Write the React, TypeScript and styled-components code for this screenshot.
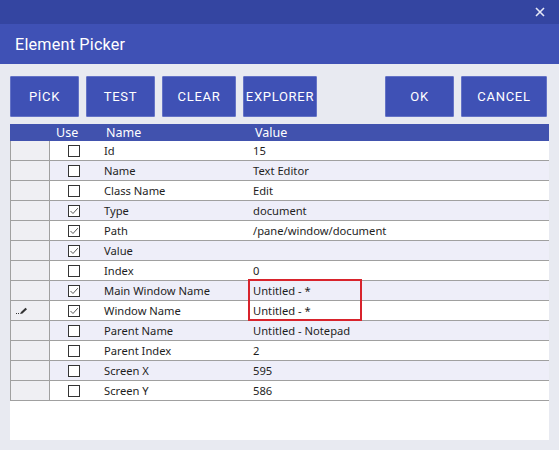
import React from "react";
import styled, { createGlobalStyle } from "styled-components";

const Global = createGlobalStyle`
  html, body { margin: 0; padding: 0; }
  body { background: #e8eaf1; font-family: Roboto, "Noto Sans", sans-serif; }
  #root { width: 559px; height: 450px; overflow: hidden; }
`;

const Window = styled.div`
  width: 559px;
  height: 450px;
  display: flex;
  flex-direction: column;
  background: #e8eaf1;
`;

const TitleBar = styled.div`
  height: 24px;
  background: #3445a1;
  display: flex;
  justify-content: flex-end;
  align-items: center;
  padding-right: 13px;
`;

const CloseBtn = styled.div`
  width: 12px;
  height: 12px;
  display: flex;
  align-items: center;
  justify-content: center;
`;

const Header = styled.div`
  height: 40px;
  background: #3f51b5;
  display: flex;
  align-items: center;
  padding-left: 15px;
  color: #fff;
  font-family: Roboto, sans-serif;
  font-size: 16.2px;
  font-weight: 400;
  letter-spacing: 0.2px;
`;

const Toolbar = styled.div`
  display: flex;
  gap: 7px;
  padding: 12px 12px 0 10px;
`;

const Button = styled.div<{ $w: number; $push?: boolean }>`
  width: ${(p) => p.$w}px;
  height: 41px;
  box-sizing: border-box;
  background: #3f51b5;
  border: 1px solid #6473c6;
  border-radius: 1px;
  color: #fff;
  font-family: Roboto, sans-serif;
  font-size: 13px;
  font-weight: 400;
  letter-spacing: 0.7px;
  display: flex;
  align-items: center;
  justify-content: center;
  margin-left: ${(p) => (p.$push ? "auto" : "0")};
`;

const Grid = styled.div`
  position: relative;
  margin: 7px 10px 0 10px;
  height: 316px;
  background: #fff;
  font-family: "Noto Sans", "Open Sans", sans-serif;
  font-size: 11.2px;
  color: #1e1e1e;
`;

const Row = styled.div<{ $alt?: boolean }>`
  display: grid;
  grid-template-columns: 40px 48px 151px 1fr;
  height: 20px;
  box-sizing: border-box;
  border-bottom: 1px solid #a0a0a0;
  background: ${(p) => (p.$alt ? "#eeeef9" : "#fff")};
`;

const HeadRow = styled.div`
  display: grid;
  grid-template-columns: 40px 48px 151px 1fr;
  height: 17px;
  background: #4152ae;
  color: #fff;
  font-family: "Noto Sans", "Open Sans", sans-serif;
  font-size: 12.5px;
  align-items: center;
  line-height: 17px;
`;

const HeadCell = styled.div<{ $pad: number }>`
  padding-left: ${(p) => p.$pad}px;
  white-space: nowrap;
`;

const RowHeader = styled.div`
  background: #efeff3;
  border-left: 1px solid #a0a0a0;
  border-right: 1px solid #a0a0a0;
  display: flex;
  align-items: center;
  padding-left: 4px;
`;

const UseCell = styled.div`
  display: flex;
  align-items: center;
  justify-content: center;
`;

const Cell = styled.div<{ $pad: number }>`
  display: flex;
  align-items: center;
  padding-left: ${(p) => p.$pad}px;
  white-space: nowrap;
`;

const Box = styled.div`
  width: 12px;
  height: 12px;
  box-sizing: border-box;
  border: 1px solid #333;
  background: #fff;
  display: flex;
  align-items: center;
  justify-content: center;
`;

const Highlight = styled.div`
  position: absolute;
  left: 238px;
  top: 155px;
  width: 114px;
  height: 42px;
  box-sizing: border-box;
  border: 2px solid #d8232c;
  pointer-events: none;
`;

const rows: { name: string; value: string; checked: boolean; edit?: boolean }[] = [
  { name: "Id", value: "15", checked: false },
  { name: "Name", value: "Text Editor", checked: false },
  { name: "Class Name", value: "Edit", checked: false },
  { name: "Type", value: "document", checked: true },
  { name: "Path", value: "/pane/window/document", checked: true },
  { name: "Value", value: "", checked: true },
  { name: "Index", value: "0", checked: false },
  { name: "Main Window Name", value: "Untitled - *", checked: true },
  { name: "Window Name", value: "Untitled - *", checked: true, edit: true },
  { name: "Parent Name", value: "Untitled - Notepad", checked: false },
  { name: "Parent Index", value: "2", checked: false },
  { name: "Screen X", value: "595", checked: false },
  { name: "Screen Y", value: "586", checked: false },
];

const Check = ({ on }: { on: boolean }) => (
  <Box>
    {on && (
      <svg width="10" height="10" viewBox="0 0 10 10">
        <path d="M1.5 5 L4 7.5 L8.8 2.2" fill="none" stroke="#555" strokeWidth="1" />
      </svg>
    )}
  </Box>
);

const Pencil = () => (
  <svg width="14" height="8" viewBox="0 0 14 8">
    <rect x="1" y="6" width="1" height="1" fill="#333" />
    <rect x="3" y="6" width="1" height="1" fill="#333" />
    <path d="M5 7 L6 5 L10.5 0.8 L12 2.2 L7.5 6.5 Z" fill="#333" />
  </svg>
);

const buttons = [
  { label: "PİCK", w: 69 },
  { label: "TEST", w: 69 },
  { label: "CLEAR", w: 74 },
  { label: "EXPLORER", w: 74 },
  { label: "OK", w: 69, push: true },
  { label: "CANCEL", w: 86 },
];

export default function App() {
  return (
    <Window>
      <Global />
      <TitleBar>
        <CloseBtn>
          <svg width="10" height="10" viewBox="0 0 10 10">
            <path d="M1 1 L9 9 M9 1 L1 9" stroke="#e6e8f6" strokeWidth="1.6" />
          </svg>
        </CloseBtn>
      </TitleBar>
      <Header>Element Picker</Header>
      <Toolbar>
        {buttons.map((b) => (
          <Button key={b.label} $w={b.w} $push={b.push}>
            {b.label}
          </Button>
        ))}
      </Toolbar>
      <Grid>
        <HeadRow>
          <HeadCell $pad={0} />
          <HeadCell $pad={6}>Use</HeadCell>
          <HeadCell $pad={8}>Name</HeadCell>
          <HeadCell $pad={6}>Value</HeadCell>
        </HeadRow>
        {rows.map((r, i) => (
          <Row key={r.name} $alt={i % 2 === 1}>
            <RowHeader>{r.edit && <Pencil />}</RowHeader>
            <UseCell>
              <Check on={r.checked} />
            </UseCell>
            <Cell $pad={6}>{r.name}</Cell>
            <Cell $pad={4}>{r.value}</Cell>
          </Row>
        ))}
        <Highlight />
      </Grid>
    </Window>
  );
}
